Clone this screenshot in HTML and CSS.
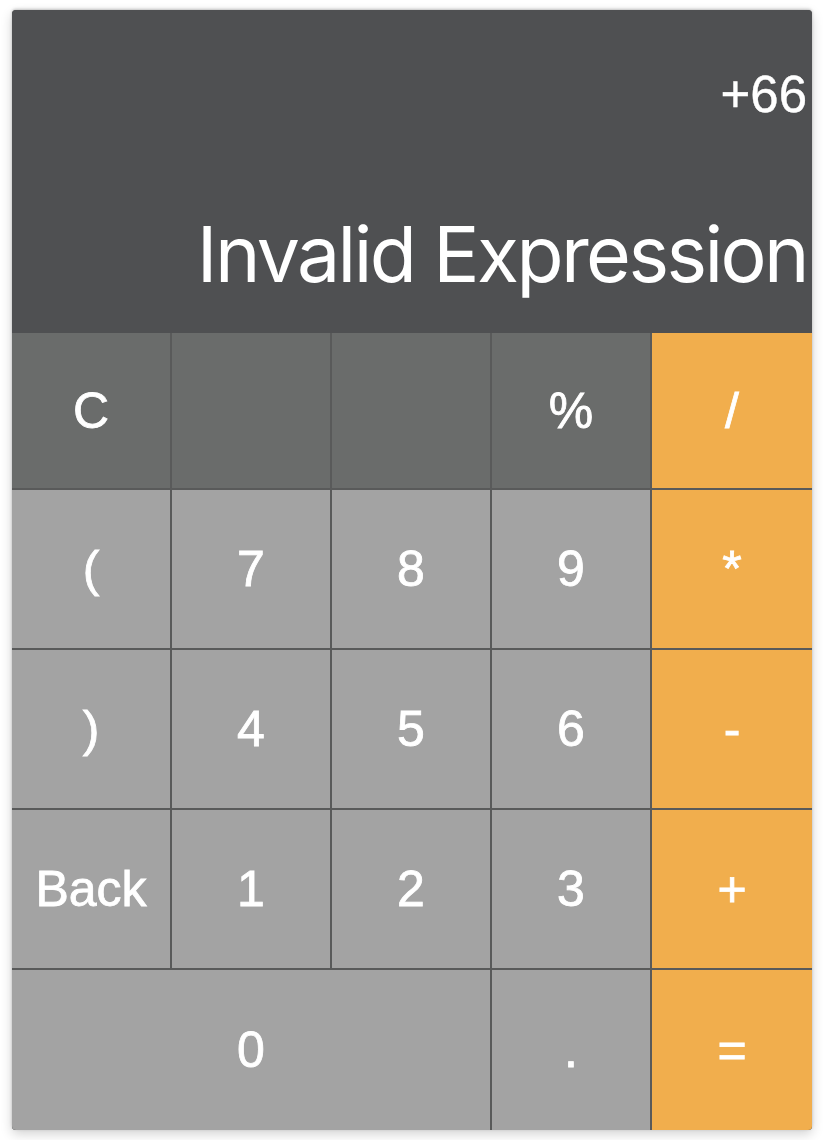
FILE: index.html
```html
<!DOCTYPE html>
<html lang="en">
<head>
<meta charset="utf-8">
<title>Calculator</title>
<link rel="stylesheet" href="styles.css">
</head>
<body>
<div class="calculator">
  <div class="display">
    <div class="previous">+66</div>
    <div class="current">Invalid Expression</div>
  </div>
  <div class="keys">
    <button class="key fn">C</button>
    <button class="key fn"></button>
    <button class="key fn"></button>
    <button class="key fn">%</button>
    <button class="key op">/</button>

    <button class="key">(</button>
    <button class="key">7</button>
    <button class="key">8</button>
    <button class="key">9</button>
    <button class="key op">*</button>

    <button class="key">)</button>
    <button class="key">4</button>
    <button class="key">5</button>
    <button class="key">6</button>
    <button class="key op">-</button>

    <button class="key">Back</button>
    <button class="key">1</button>
    <button class="key">2</button>
    <button class="key">3</button>
    <button class="key op">+</button>

    <button class="key zero">0</button>
    <button class="key">.</button>
    <button class="key op">=</button>
  </div>
</div>
</body>
</html>
```

FILE: styles.css
```css
* {
  box-sizing: border-box;
}

html, body {
  margin: 0;
  padding: 0;
  background: #ffffff;
}

body {
  padding: 10px 12px;
}

.calculator {
  width: 800px;
  height: 1120px;
  display: flex;
  flex-direction: column;
  border-radius: 4px;
  overflow: hidden;
  box-shadow: 0 -1px 3px rgba(0, 0, 0, 0.22), 0 4px 12px rgba(0, 0, 0, 0.18);
  background: #595a5a;
}

.display {
  height: 323px;
  background: #4f5052;
  color: #ffffff;
  display: flex;
  flex-direction: column;
  justify-content: space-between;
  align-items: flex-end;
  padding: 59px 5px 40px 5px;
}

.previous {
  font-family: "Liberation Sans", Arial, sans-serif;
  font-size: 51px;
  line-height: 1;
  -webkit-text-stroke: 0.4px #ffffff;
}

.current {
  font-family: Inter, "Noto Sans", sans-serif;
  font-size: 77px;
  letter-spacing: -2.6px;
  line-height: 1;
  white-space: nowrap;
}

.keys {
  flex: 1;
  display: grid;
  grid-template-columns: 158px 158px 158px 158px 160px;
  grid-template-rows: 155px 158px 158px 158px 160px;
  gap: 2px;
  background: #595a5a;
}

.key {
  border: none;
  margin: 0;
  padding: 0;
  background: #a3a3a3;
  color: #ffffff;
  font-family: "Liberation Sans", Arial, sans-serif;
  font-size: 50px;
  -webkit-text-stroke: 0.8px #ffffff;
  display: flex;
  align-items: center;
  justify-content: center;
}

.key.fn {
  background: #6a6c6b;
}

.key.op {
  background: #f1ae4d;
}

.key.zero {
  grid-column: span 3;
}
```
